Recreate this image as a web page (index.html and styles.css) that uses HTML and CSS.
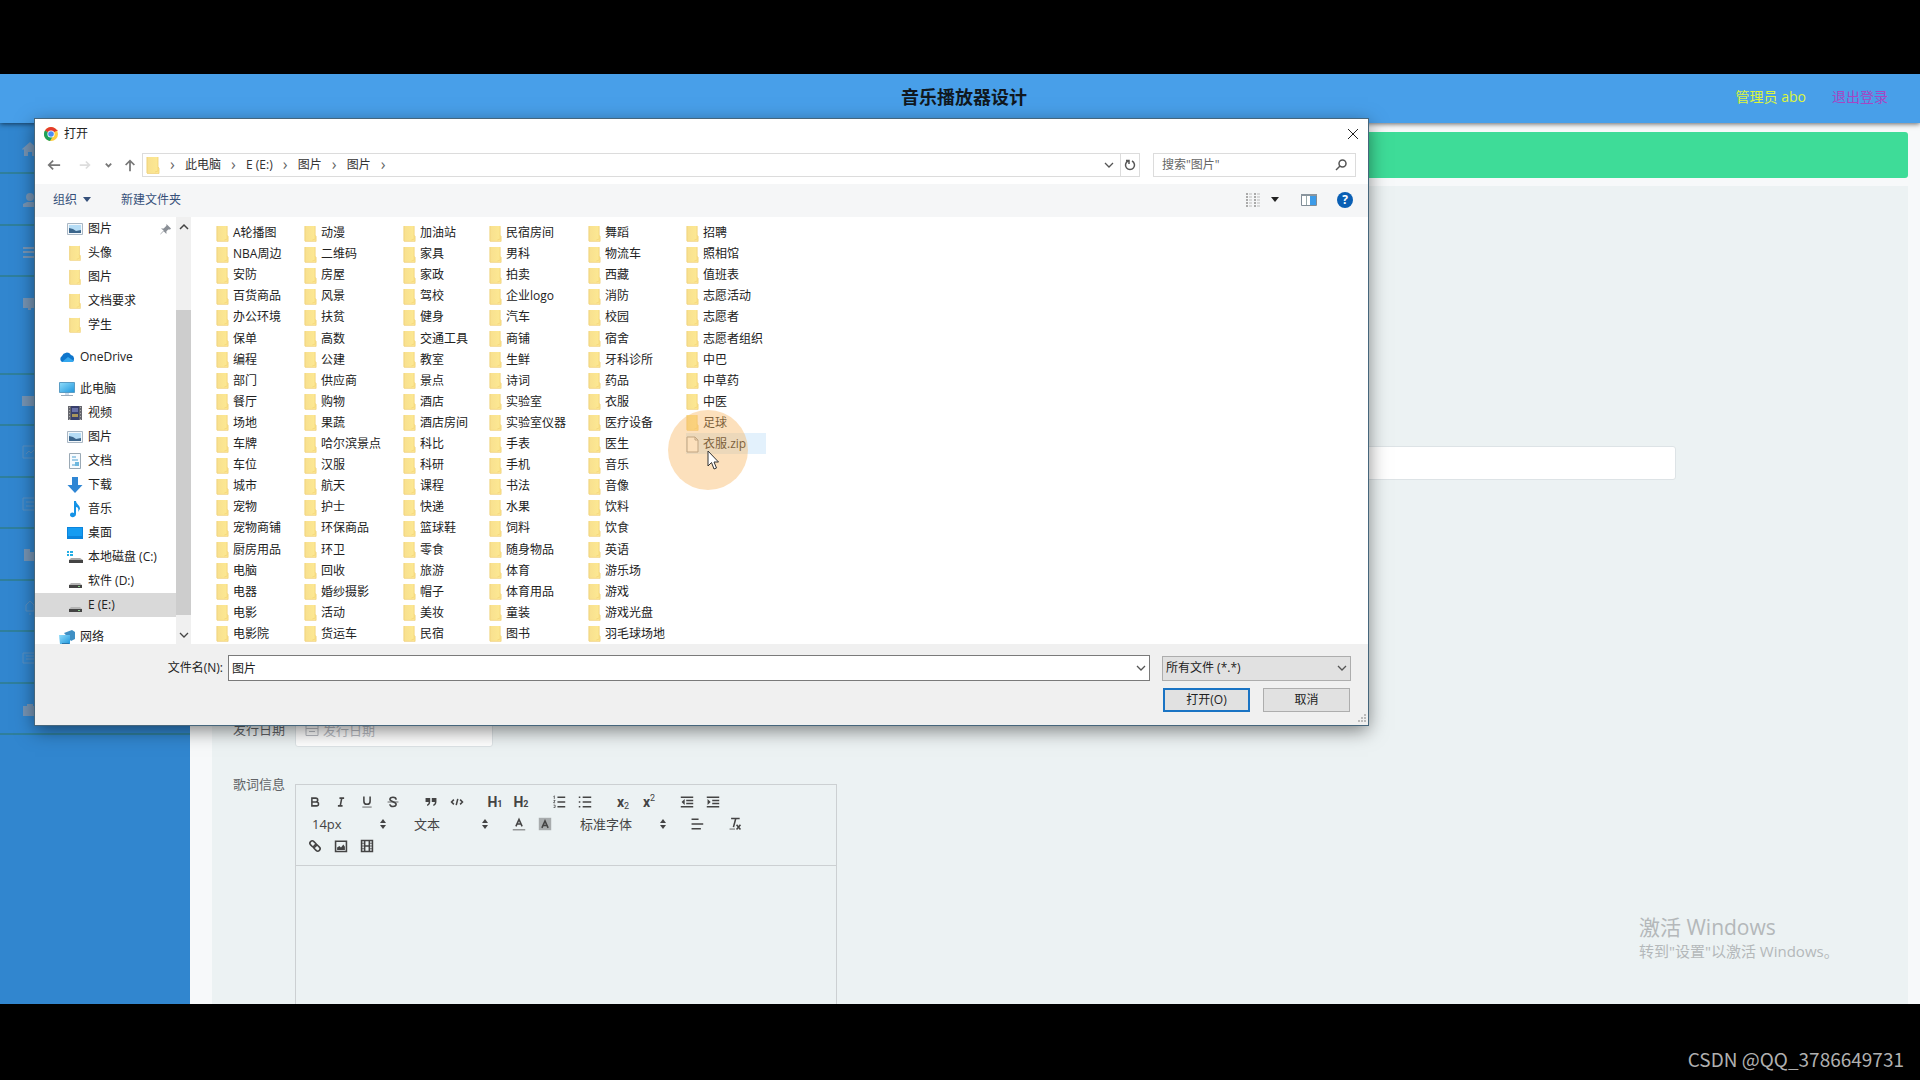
FILE: index.html
```html
<!DOCTYPE html>
<html lang="zh-CN">
<head>
<meta charset="utf-8">
<title>音乐播放器设计</title>
<link rel="stylesheet" href="styles.css">
</head>
<body>
<svg class="sprite" aria-hidden="true">
  <defs>
    <linearGradient id="gold" x1="0" x2="1"><stop offset="0" stop-color="#f8e08f"/><stop offset="1" stop-color="#fde993"/></linearGradient>
    <linearGradient id="sky" x1="0" y1="0" x2="1" y2="1"><stop offset="0" stop-color="#8fdcfb"/><stop offset="1" stop-color="#1f96dc"/></linearGradient>
  </defs>
  <symbol id="folder" viewBox="0 0 14 18"><path d="M1 1h11v10l1 1v5H1z" fill="url(#gold)"/><path d="M1 17.500h12V12l-1-1V1" fill="none" stroke="#f0cf72" stroke-width=".8"/><path d="M1 1v16" stroke="#efd279"/><path d="M9 16l3-1v-4" fill="none" stroke="#f5d77d"/></symbol>
  <symbol id="picture" viewBox="0 0 16 16"><path d="M.5 2.500h15v11H.5z" fill="#f4f8fb" stroke="#a9b7c4"/><path d="M2 4h12v8H2z" fill="#b5dcf5"/><path d="M2 7l4 1 3 2 5-1v3H2z" fill="#3c668c"/></symbol>
  <symbol id="drive" viewBox="0 0 16 16"><path d="M4 10h9l2 2H2z" fill="#b5b5b5"/><path d="M2 12h13v3H2z" fill="#444"/><path d="M11 13h2v1h-2z" fill="#8c8"/></symbol>
  <symbol id="down" viewBox="0 0 10 10"><path d="M1 3l4 4 4-4" fill="none" stroke="currentColor" stroke-width="1.300"/></symbol>
  <symbol id="updown" viewBox="0 0 8 12"><path d="M1 5l3-4 3 4zM1 7l3 4 3-4z" fill="currentColor"/></symbol>
</svg>

<div class="app">
  <header class="topbar">
    <h1 class="brand">音乐播放器设计</h1>
    <div class="account"><span class="admin">管理员 abo</span><a class="logout" href="#">退出登录</a></div>
  </header>
  <div class="body">
    <nav class="side" aria-label="菜单">
      <a class="side-item" href="#" aria-label="首页"><svg viewBox="0 0 16 16"><path d="M8 1l8 7-1 1-1-1v7h-4v-4H6v4H2V8L1 9 0 8z"/></svg></a>
      <a class="side-item" href="#" aria-label="用户"><svg viewBox="0 0 16 16"><circle cx="8" cy="5" r="4"/><path d="M1 15v-3l4-2h6l4 2v3z"/></svg></a>
      <a class="side-item" href="#" aria-label="列表"><svg viewBox="0 0 16 16"><path d="M1 3h14v2H1zM1 7h14v2H1zM1 12h14v2H1z"/></svg></a>
      <a class="side-item open" href="#" aria-label="歌曲"><svg viewBox="0 0 16 16"><path d="M1 3h14v10H9v2H6v-2H1z"/></svg></a>
      <a class="side-item" href="#" aria-label="分类"><svg viewBox="0 0 16 16"><path d="M0 3h15v10H0z"/></svg></a>
      <a class="side-item line" href="#" aria-label="图表"><svg viewBox="0 0 16 16"><path d="M1 2h14v12H1zM4 10l3-3 2 2 4-4"/></svg></a>
      <a class="side-item line" href="#" aria-label="消息"><svg viewBox="0 0 16 16"><path d="M1 2h14v12H1zM4 6h8M4 10h8"/></svg></a>
      <a class="side-item" href="#" aria-label="文件"><svg viewBox="0 0 16 16"><path d="M2 2h6v3h7v9H2z"/></svg></a>
      <a class="side-item line" href="#" aria-label="通知"><svg viewBox="0 0 16 16"><path d="M4 12V6l4-4 4 4v6zM7 15h2"/></svg></a>
      <a class="side-item line" href="#" aria-label="记录"><svg viewBox="0 0 16 16"><path d="M1 3h14v10H1zM4 6h8M4 9h8"/></svg></a>
      <a class="side-item" href="#" aria-label="系统"><svg viewBox="0 0 16 16"><path d="M5 2h6v2h4v10H1V4h4z"/></svg></a>
    </nav>
    <main class="main">
      <div class="crumb"></div>
      <form class="panel">
        <div class="row"><span class="label"></span><input class="wide" type="text" aria-label="歌曲名称"></div>
        <div class="row row-date"><label class="label" for="date">发行日期</label>
          <div class="date"><svg viewBox="0 0 14 14"><path d="M1 2.500h12v10H1zM1 5.500h12M4 8.500h6M4 1v2M10 1v2"/></svg><input id="date" type="text" placeholder="发行日期"></div></div>
        <div class="row row-editor"><label class="label" for="lyrics">歌词信息</label>
          <div class="editor">
            <div class="tools">
              <div class="tool-row">
                <div class="group">
                  <button type="button" aria-label="粗体"><svg viewBox="0 0 18 18"><path class="s" d="M5 4h5a2.500 2.500 0 0 1 0 5H5zM5 9h6a2.500 2.500 0 0 1 0 5H5z"/></svg></button>
                  <button type="button" aria-label="斜体"><svg viewBox="0 0 18 18"><path class="s" d="M7 4h6M5 14h6M8 14l2-10"/></svg></button>
                  <button type="button" aria-label="下划线"><svg viewBox="0 0 18 18"><path class="s" d="M5 2v6a4 4 0 0 0 8 0V2"/><path class="t" d="M3 15.500h12"/></svg></button>
                  <button type="button" aria-label="删除线"><svg viewBox="0 0 18 18"><path class="s" d="M13 6c0-4-8-4-8-.5s8 3 8 6.500-8 4-8 0"/><path class="t" d="M2 9h14"/></svg></button>
                </div>
                <div class="group">
                  <button type="button" aria-label="引用"><svg viewBox="0 0 18 18"><path d="M2 4h6v5c0 3-2 5-4 5v-2c1 0 2-1 2-3H2zM10 4h6v5c0 3-2 5-4 5v-2c1 0 2-1 2-3h-4z"/></svg></button>
                  <button type="button" aria-label="代码"><svg viewBox="0 0 18 18"><path class="s" d="M5 6L2 9l3 3M13 6l3 3-3 3M10 5l-2 8"/></svg></button>
                </div>
                <div class="group">
                  <button type="button" class="head">H<small>1</small></button>
                  <button type="button" class="head">H<small>2</small></button>
                </div>
                <div class="group">
                  <button type="button" aria-label="有序列表"><svg viewBox="0 0 18 18"><path class="s" d="M7 3h10M7 9h10M7 15h10"/><path class="t" d="M2 2l1-1v4M2 7h2l-2 3h2M2 13h2v3H2"/></svg></button>
                  <button type="button" aria-label="无序列表"><svg viewBox="0 0 18 18"><path class="s" d="M6 3h11M6 9h11M6 15h11M1 3h2M1 9h2M1 15h2"/></svg></button>
                </div>
                <div class="group">
                  <button type="button" class="head">x<small class="low">2</small></button>
                  <button type="button" class="head">x<small class="high">2</small></button>
                </div>
                <div class="group">
                  <button type="button" aria-label="减少缩进"><svg viewBox="0 0 18 18"><path class="s" d="M1 3h16M8 7h9M8 11h9M1 15h16"/><path d="M6 5v8L2 9z"/></svg></button>
                  <button type="button" aria-label="增加缩进"><svg viewBox="0 0 18 18"><path class="s" d="M1 3h16M8 7h9M8 11h9M1 15h16"/><path d="M2 5v8l4-4z"/></svg></button>
                </div>
              </div>
              <div class="tool-row">
                <div class="picker"><select aria-label="字号"><option>14px</option></select><svg><use href="#updown"/></svg></div>
                <div class="picker"><select aria-label="标题"><option>文本</option></select><svg><use href="#updown"/></svg></div>
                <div class="group">
                  <button type="button" aria-label="文字颜色"><svg viewBox="0 0 18 18"><path class="s" d="M5 12l4-9 4 9M6 9h6"/><path class="t" d="M1 16.500h16"/></svg></button>
                  <button type="button" aria-label="背景颜色"><svg viewBox="0 0 18 18"><path d="M1 1h16v16H1z" opacity=".4"/><path class="s" d="M5 14l4-9 4 9M6 11h6"/></svg></button>
                </div>
                <div class="picker picker-font"><select aria-label="字体"><option>标准字体</option></select><svg><use href="#updown"/></svg></div>
                <div class="group"><button type="button" aria-label="对齐"><svg viewBox="0 0 18 18"><path class="s" d="M2 3h9M2 9h15M2 15h12"/></svg></button></div>
                <div class="group"><button type="button" aria-label="清除格式"><svg viewBox="0 0 18 18"><path class="s" d="M4 2h11M10 2L7 13M11 10l5 6M16 10l-5 6"/><path class="t" d="M2 15.500h7"/></svg></button></div>
              </div>
              <div class="tool-row">
                <div class="group">
                  <button type="button" aria-label="链接"><svg viewBox="0 0 18 18"><g class="s" transform="rotate(45 9 9)"><rect x="1" y="6" width="9" height="6" rx="3"/><rect x="8" y="6" width="9" height="6" rx="3"/></g></svg></button>
                  <button type="button" aria-label="图片"><svg viewBox="0 0 18 18"><path class="s" d="M2 3h14v13H2z"/><path d="M4 14v-3l3-2 2 2 3-4 2 3v4z"/></svg></button>
                  <button type="button" aria-label="视频"><svg viewBox="0 0 18 18"><path class="s" d="M2 2h14v14H2zM6 2v14M12 2v14M6 9h6"/><path class="t" d="M2 5.500h4M2 9h4M2 12.500h4M12 5.500h4M12 9h4M12 12.500h4"/></svg></button>
                </div>
              </div>
            </div>
            <textarea id="lyrics"></textarea>
          </div>
        </div>
      </form>
    </main>
  </div>

  <section class="dialog" role="dialog" aria-labelledby="dialog-title">
    <div class="titlebar">
      <svg class="i16" viewBox="0 0 16 16"><circle cx="8" cy="8" r="7" fill="#ffcd40"/><path d="M8 8L2 4.400A7 7 0 0 1 14 4.400z" fill="#e33b2e"/><path d="M8 8L2 4.400A7 7 0 0 0 7 15l3-5z" fill="#1da05a"/><path d="M5 4.400h9.500" stroke="#e33b2e" stroke-width="1"/><circle cx="8" cy="8" r="3.600" fill="#fff"/><circle cx="8" cy="8" r="2.800" fill="#4b8bf5"/></svg>
      <h2 id="dialog-title">打开</h2>
      <button type="button" class="close" aria-label="关闭"><svg viewBox="0 0 12 12"><path d="M1 1l10 10M11 1L1 11" stroke="currentColor" fill="none"/></svg></button>
    </div>
    <div class="navbar">
      <div class="arrows">
        <button type="button" aria-label="后退"><svg viewBox="0 0 16 16"><path d="M15 8H3M7 3L2 8l5 5"/></svg></button>
        <button type="button" aria-label="前进" class="off"><svg viewBox="0 0 16 16"><path d="M2 8h11M9 4l4 4-4 4"/></svg></button>
        <button type="button" aria-label="最近" class="recent"><svg viewBox="0 0 10 10"><path d="M2 3l3 3 3-3"/></svg></button>
        <button type="button" aria-label="上移"><svg viewBox="0 0 16 16"><path d="M8 15V3M3 8l5-5 5 5"/></svg></button>
      </div>
      <div class="address">
        <svg class="fold"><use href="#folder"/></svg><i>›</i><a href="#">此电脑</a><i>›</i><a href="#">E (E:)</a><i>›</i><a href="#">图片</a><i>›</i><a href="#">图片</a><i>›</i>
        <button type="button" class="hist" aria-label="历史"><svg><use href="#down"/></svg></button>
        <button type="button" class="refresh" aria-label="刷新"><svg viewBox="0 0 12 12"><path d="M4 2a4.500 4.500 0 1 0 4 0M5 5V1.500H2" fill="none" stroke="currentColor" stroke-width="1.500"/></svg></button>
      </div>
      <div class="search"><input type="text" aria-label="搜索" placeholder='搜索"图片"'><svg viewBox="0 0 12 12"><circle cx="7.500" cy="4.500" r="3.500"/><path d="M5 7l-4 4"/></svg></div>
    </div>
    <div class="commands">
      <button type="button">组织 <svg viewBox="0 0 8 5"><path d="M0 0h8L4 5z" fill="currentColor"/></svg></button>
      <button type="button">新建文件夹</button>
      <div class="views">
        <button type="button" aria-label="视图"><svg class="i16" viewBox="0 0 16 16"><path d="M1 2h2M1 5h2M1 8h2M1 11h2M1 14h2M9 2h2M9 5h2M9 8h2M9 11h2M9 14h2" stroke="#aaa" stroke-width="2"/><path d="M4 2h3M4 5h3M4 8h3M4 11h3M4 14h3M12 2h3M12 5h3M12 8h3M12 11h3M12 14h3" stroke="#bbb"/></svg></button>
        <button type="button" class="view-more" aria-label="更多视图"><svg viewBox="0 0 8 5"><path d="M0 0h8L4 5z" fill="#222"/></svg></button>
        <button type="button" aria-label="预览窗格"><svg class="i16" viewBox="0 0 16 16"><path d="M.5 2.500h15v11H.5z" fill="#fff" stroke="#7f8b96"/><path d="M0 2h16v2H0z" fill="#8a959e"/><path d="M9 4h6v9H9z" fill="#3c9be8"/><path d="M5.500 4v9" stroke="#9aa"/></svg></button>
        <button type="button" class="help" aria-label="帮助">?</button>
      </div>
    </div>
    <div class="browser">
      <div class="tree">
        <ul>
          <li class="sub"><svg class="i16"><use href="#picture"/></svg>图片<svg class="pin" viewBox="0 0 12 12"><path d="M7 0l5 5-1 1H9L7 8v3L4 8 1 11 0 12l1-2 3-3-3-2h3l3-3z"/></svg></li>
          <li class="sub"><svg class="i16"><use href="#folder"/></svg>头像</li>
          <li class="sub"><svg class="i16"><use href="#folder"/></svg>图片</li>
          <li class="sub"><svg class="i16"><use href="#folder"/></svg>文档要求</li>
          <li class="sub"><svg class="i16"><use href="#folder"/></svg>学生</li>
        </ul>
        <ul><li><svg class="i16" viewBox="0 0 16 16"><path d="M3 13a3.500 3.500 0 0 1 0-6 5 5 0 0 1 9-1 3.700 3.700 0 0 1 1 7z" fill="#0f76cc"/><path d="M3 13l6-5 6 4-2 1z" fill="#35a8ee"/></svg>OneDrive</li></ul>
        <ul>
          <li><svg class="i16" viewBox="0 0 16 16"><path d="M.5 1.500h15v10H.5z" fill="url(#sky)" stroke="#5a9cc4"/><path d="M2 14.500h12" stroke="#9ab" stroke-width="1"/><path d="M6 12h4v2H6z" fill="#cde"/></svg>此电脑</li>
          <li class="sub"><svg class="i16" viewBox="0 0 16 16"><path d="M1 1h14v14H1z" fill="#66676e"/><path d="M4 1h8v14H4z" fill="#39406c"/><path d="M5 3h6v4H5z" fill="#6a72a8"/><path d="M5 9h6v3H5z" fill="#a9965c"/><path d="M2.500 2v13M13.500 2v13" stroke="#aaa" stroke-dasharray="1 2"/></svg>视频</li>
          <li class="sub"><svg class="i16"><use href="#picture"/></svg>图片</li>
          <li class="sub"><svg class="i16" viewBox="0 0 16 16"><path d="M2.500.5h11v15h-11z" fill="#f7fbfe" stroke="#9aa9b5"/><path d="M5 4h4M5 7h6M5 12h3" stroke="#4d9fd0"/><path d="M8 9h4v4H8z" fill="#6cb7de"/></svg>文档</li>
          <li class="sub"><svg class="i16" viewBox="0 0 16 16"><path d="M5 0h6v8h4.500L8 16 .5 8H5z" fill="#2f86d4"/></svg>下载</li>
          <li class="sub"><svg class="i16" viewBox="0 0 16 16"><path d="M7 0h2c0 3 4 4 4 8l-2 3c1-3 0-5-2-5v7c0 4-6 4-6 1s3-3 4-2z" fill="#1593e6"/></svg>音乐</li>
          <li class="sub"><svg class="i16" viewBox="0 0 16 16"><path d="M0 2h16v12H0z" fill="#0b84dc"/><path d="M1 3h14v8H1z" fill="#159cf2"/></svg>桌面</li>
          <li class="sub"><svg class="i16" viewBox="0 0 16 16"><path d="M0 2h2v2H0zM3 2h3v2H3zM0 5h2v2H0zM3 5h3v2H3z" fill="#23aee5"/><path d="M4 9h9l3 2H2z" fill="#a7a7a7"/><path d="M2 11h14v3H2z" fill="#444"/></svg>本地磁盘 (C:)</li>
          <li class="sub"><svg class="i16"><use href="#drive"/></svg>软件 (D:)</li>
          <li class="sub picked"><svg class="i16"><use href="#drive"/></svg>E (E:)</li>
        </ul>
        <ul><li><svg class="i16" viewBox="0 0 16 16"><path d="M5 4l8-3 3 2v7l-4 2z" fill="#3f8fc4"/><path d="M0 6h11v9H1z" fill="url(#sky)"/><path d="M3 14h7v2H3z" fill="#2a76ab"/></svg>网络</li></ul>
      </div>
      <div class="scroll"><svg viewBox="0 0 10 10"><path d="M1 7l4-4 4 4" fill="none" stroke="currentColor" stroke-width="1.500"/></svg><span class="thumb"></span><svg><use href="#down"/></svg></div>
      <ul class="files" id="files"></ul>
    </div>
    <div class="footer">
      <label class="name-label" for="filename">文件名(N):</label>
      <div class="combo"><input id="filename" type="text" value="图片"><svg><use href="#down"/></svg></div>
      <div class="combo type"><select aria-label="文件类型"><option>所有文件 (*.*)</option></select><svg><use href="#down"/></svg></div>
      <div class="actions"><button type="button" class="primary">打开(O)</button><button type="button">取消</button></div>
      <svg class="grip" viewBox="0 0 10 10"><path d="M7 0h2v2H7zM4 3h2v2H4zM7 3h2v2H7zM1 6h2v2H1zM4 6h2v2H4zM7 6h2v2H7z" fill="#bbb"/></svg>
    </div>
    <span class="halo"></span>
    <svg class="pointer" viewBox="0 0 12 20"><path d="M1 1v15l3.500-3.500L7 19l2.500-1L7 12h4.500z" fill="#fff" stroke="#333"/></svg>
  </section>

  <aside class="activate"><strong>激活 Windows</strong><span>转到"设置"以激活 Windows。</span></aside>
</div>
<footer class="credit">CSDN @QQ_3786649731</footer>
<script src="files.js"></script>
</body>
</html>
```
FILE: styles.css
```css
* { box-sizing: border-box; }
body {
  margin: 0;
  height: 100vh;
  display: flex;
  flex-direction: column;
  padding-top: 74px;
  background: #000;
  font: 12px/16px "Open Sans", "Noto Sans CJK SC", sans-serif;
  color: #222;
  overflow: hidden;
}
h1, h2, ul { margin: 0; padding: 0; }
ul { list-style: none; }
a { color: inherit; text-decoration: none; }
button, input, select, textarea { font: inherit; color: inherit; margin: 0; padding: 0; border: 0; background: none; outline: 0; border-radius: 0; }
select { appearance: none; }
textarea { resize: none; }
svg { display: block; flex: none; overflow: visible; }
.sprite { position: absolute; width: 0; height: 0; }
.i16 { width: 16px; height: 16px; }

.app { position: relative; flex: 1; min-height: 0; display: flex; flex-direction: column; overflow: hidden; background: #f7f9fa; }
.topbar {
  position: relative;
  z-index: 1;
  display: grid;
  grid-template-columns: 1fr auto 1fr;
  align-items: center;
  height: 49px;
  padding: 0 32px 4px 40px;
  background: #489fe9;
  box-shadow: 0 1px 5px rgba(0, 0, 0, .6);
}
.brand { grid-column: 2; font-size: 18px; line-height: 24px; color: #101820; }
.account { display: flex; justify-content: flex-end; gap: 26px; font-size: 14px; }
.admin { color: #dcf53c; }
.logout { color: #a745c4; }

.body { flex: 1; min-height: 0; display: flex; }
.side { width: 190px; flex: none; background: #3186cf; }
.side-item { display: flex; height: 52px; padding: 18px 22px; border-bottom: 2px solid #2f7f9c; }
.side-item:nth-child(odd) { height: 51px; }
.side-item.open { height: 98px; }
.side-item svg { width: 16px; height: 16px; fill: #7795b5; }
.side-item.line svg { fill: none; stroke: #5a8fc0; }

.main { flex: 1; min-width: 0; display: flex; flex-direction: column; gap: 8px; padding: 9px 12px 0 22px; }
.crumb { height: 46px; flex: none; border-radius: 3px; background: #3edc98; }
.panel { flex: 1; min-height: 0; padding: 260px 232px 0 21px; background: #ecf2f3; overflow: hidden; }
.row { display: flex; align-items: flex-start; }
.label { width: 62px; flex: none; font-size: 13px; line-height: 34px; color: #606266; }
.wide { flex: 1; height: 34px; background: #fff; border: 1px solid #dde3e6; border-radius: 3px; }
.row-date { margin-top: 232px; }
.date { display: flex; align-items: center; gap: 4px; width: 198px; height: 35px; padding: 0 9px; background: #fff; border: 1px solid #dde3e6; border-radius: 3px; }
.date svg { width: 14px; height: 14px; fill: none; stroke: #b8bbc2; }
.date input { width: 120px; font-size: 13px; }
.date input::placeholder { color: #b8bbc2; opacity: 1; }
.row-editor { margin-top: 29px; }
.row-editor .label { line-height: 16px; }
.editor { width: 542px; margin-top: 8px; border: 1px solid #ccd0d2; }
.tools { padding: 6px 6px 8px; border-bottom: 1px solid #ccd0d2; color: #444; }
.tool-row { display: flex; gap: 12px; }
.group { display: flex; height: 22px; }
.group button { width: 26px; display: flex; justify-content: center; align-items: center; }
.group svg { width: 14px; height: 14px; fill: #444; }
.group .s { fill: none; stroke: #444; stroke-width: 2; }
.group .t { fill: none; stroke: #444; }
.group .head { font: bold 14px/22px "Roboto", sans-serif; }
.head small { font-size: 9px; line-height: 9px; padding-top: 4px; }
.head .low { padding-top: 9px; font-weight: 400; }
.head .high { padding: 0 0 8px; font-weight: 400; }
.picker { display: grid; width: 90px; height: 22px; align-items: center; }
.picker select, .picker svg { grid-area: 1 / 1; }
.picker select { padding-left: 10px; font-size: 13px; height: 22px; }
.picker svg { justify-self: end; width: 8px; height: 12px; margin-right: 5px; pointer-events: none; }
.picker-font { width: 102px; }
.editor textarea { display: block; width: 100%; height: 200px; }

.dialog {
  position: absolute;
  z-index: 2;
  left: 35px;
  top: 45px;
  width: min(1333px, calc(100% - 70px));
  background: #fff;
  outline: 1px solid #46667c;
  box-shadow: 0 5px 18px rgba(0, 0, 0, .5);
}
.titlebar { display: flex; align-items: center; gap: 5px; height: 29px; padding: 1px 9px 0 8px; }
.titlebar h2 { flex: 1; font-size: 12px; font-weight: 400; }
.close { width: 12px; height: 12px; }
.navbar { display: flex; align-items: center; height: 36px; padding: 0 12px 2px 12px; color: #333; }
.arrows { display: flex; align-items: center; gap: 17px; width: 95px; color: #777; }
.arrows svg { width: 14px; height: 14px; fill: none; stroke: currentColor; stroke-width: 2; }
.arrows .off { color: #ddd; }
.arrows .recent svg { width: 9px; height: 9px; }
.arrows .recent { margin: 0 -7px 0 -5px; }
.address { flex: 1; display: flex; align-items: center; height: 24px; padding-left: 3px; border: 1px solid #dcdcdc; }
.address .fold { width: 14px; height: 18px; }
.address i { width: 25px; text-align: center; font-style: normal; font-size: 16px; line-height: 16px; color: #666; padding-bottom: 3px; }
.hist { margin-left: auto; width: 22px; padding: 6px; color: #555; }
.hist svg, .scroll svg, .combo svg { width: 10px; height: 10px; }
.refresh { width: 19px; height: 22px; padding: 3px; border-left: 1px solid #dcdcdc; color: #555; }
.refresh svg { width: 12px; height: 12px; }
.search { display: flex; align-items: center; width: 203px; height: 24px; margin-left: 13px; padding: 0 8px; border: 1px solid #dcdcdc; }
.search input { flex: 1; min-width: 0; }
.search input::placeholder { color: #666; opacity: 1; }
.search svg { width: 12px; height: 12px; fill: none; stroke: #555; stroke-width: 1.5; }
.commands { display: flex; align-items: center; gap: 30px; height: 33px; padding: 0 15px 2px 18px; background: #f5f6f7; color: #35507a; }
.commands > button, .views { display: flex; align-items: center; gap: 6px; }
.commands > button svg, .view-more svg { width: 8px; height: 5px; }
.views { margin-left: auto; gap: 0; }
.view-more { margin: 0 22px 0 10px; }
.help { width: 16px; height: 16px; margin-left: 20px; border-radius: 50%; background: #0a5fb4; color: #fff; font-weight: 700; }
.browser { display: flex; height: 427px; }
.tree { width: 141px; flex: none; display: flex; flex-direction: column; gap: 8px; overflow: hidden; }
.tree li { display: flex; align-items: center; gap: 5px; height: 24px; padding-left: 24px; white-space: nowrap; }
.tree .sub { padding-left: 32px; }
.tree .picked { background: #d9d9d9; }
.tree .pin { width: 11px; height: 11px; margin-left: auto; margin-right: 5px; fill: #8a8f96; }
.scroll { width: 15px; display: flex; flex-direction: column; align-items: center; padding: 5px 0 4px; background: #f0f0f0; color: #444; }
.scroll .thumb { flex: 1; width: 15px; margin: 78px 0 15px; background: #cdcdcd; }
.files { display: grid; grid-auto-flow: column; grid-template-rows: repeat(20, 1fr); grid-template-columns: 88px 99px 86px 99px 98px 80px; height: 422px; margin: 5px 0 0 25px; }
.files li { display: flex; align-items: center; gap: 4px; padding-top: 1px; white-space: nowrap; }
.files svg { width: 13px; height: 17px; }
.files .hover { background: #e3f1fc; }
.footer {
  position: relative;
  display: grid;
  grid-template-columns: 188px 1fr 189px;
  column-gap: 12px;
  row-gap: 7px;
  padding: 11px 17px 13px 0;
  background: #f0f0f0;
}
.name-label { text-align: right; line-height: 26px; }
.footer .combo { display: grid; align-items: center; height: 26px; }
.combo input, .combo select, .combo svg { grid-area: 1 / 1; }
.combo svg { justify-self: end; margin-right: 4px; pointer-events: none; color: #555; }
.combo input { height: 26px; padding: 0 3px; background: #fff; border: 1px solid #7a7a7a; }
.combo select { height: 25px; padding: 0 3px; background: #e1e1e1; border: 1px solid #adadad; }
.name-label + .combo { margin-left: -7px; }
.actions { grid-column: 3; display: flex; justify-content: space-between; padding: 0 1px; }
.actions button { width: 87px; height: 24px; background: #e1e1e1; border: 1px solid #adadad; }
.actions .primary { border: 2px solid #1a74c4; }
.grip { position: absolute; right: 1px; bottom: 1px; width: 10px; height: 10px; }
.halo { position: absolute; left: 633px; top: 291px; width: 80px; height: 80px; border-radius: 50%; background: rgba(249, 182, 96, .42); }
.pointer { position: absolute; left: 672px; top: 331px; width: 12px; height: 20px; }
.activate { position: absolute; z-index: 1; left: calc(100% - 281px); bottom: 43px; display: flex; flex-direction: column; white-space: nowrap; color: #b4b8ba; }
.activate strong { font-size: 21px; font-weight: 400; line-height: 28px; }
.activate span { font-size: 15px; line-height: 20px; }
.credit { height: 76px; flex: none; padding: 40px 16px 0; text-align: right; font: 19px/30px "Noto Sans CJK SC", sans-serif; color: #b0b0b0; }
```
FILE: files.js
```js
const names = `A轮播图 NBA周边 安防 百货商品 办公环境 保单 编程 部门 餐厅 场地 车牌 车位 城市 宠物 宠物商铺 厨房用品 电脑 电器 电影 电影院
动漫 二维码 房屋 风景 扶贫 高数 公建 供应商 购物 果蔬 哈尔滨景点 汉服 航天 护士 环保商品 环卫 回收 婚纱摄影 活动 货运车
加油站 家具 家政 驾校 健身 交通工具 教室 景点 酒店 酒店房间 科比 科研 课程 快递 篮球鞋 零食 旅游 帽子 美妆 民宿
民宿房间 男科 拍卖 企业logo 汽车 商铺 生鲜 诗词 实验室 实验室仪器 手表 手机 书法 水果 饲料 随身物品 体育 体育用品 童装 图书
舞蹈 物流车 西藏 消防 校园 宿舍 牙科诊所 药品 衣服 医疗设备 医生 音乐 音像 饮料 饮食 英语 游乐场 游戏 游戏光盘 羽毛球场地
招聘 照相馆 值班表 志愿活动 志愿者 志愿者组织 中巴 中草药 中医 足球`.split(/\s+/);
const list = document.getElementById("files");
list.innerHTML = names.map(n => `<li><svg><use href="#folder"/></svg>${n}</li>`).join("") +
  `<li class="hover"><svg viewBox="0 0 13 17"><path d="M1 1h8l3 3v12H1z" fill="#fff" stroke="#999"/><path d="M9 1v3h3" fill="none" stroke="#999"/></svg>衣服.zip</li>`;
```
